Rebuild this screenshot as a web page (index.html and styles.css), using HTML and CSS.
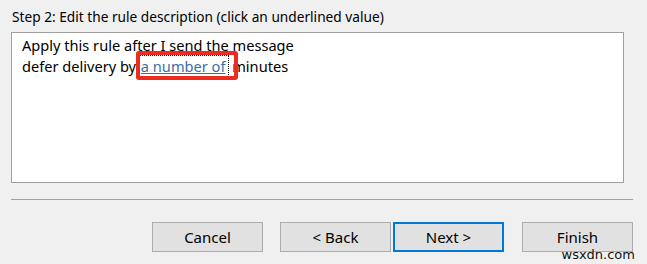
FILE: index.html
```html
<!DOCTYPE html>
<html>
<head>
<meta charset="utf-8">
<link rel="stylesheet" href="styles.css">
</head>
<body>
<div class="dialog">
  <div class="label">Step 2: Edit the rule description (click an underlined value)</div>
  <div class="desc">
    <div class="line">Apply this rule after I send the message</div>
    <div class="line">defer delivery by <span class="val"><a class="link">a number of</a></span> minutes</div>
  </div>
  <div class="sep"></div>
  <div class="buttons">
    <button class="btn">Cancel</button>
    <button class="btn back">&lt; Back</button>
    <button class="btn next">Next &gt;</button>
    <button class="btn finish">Finish</button>
  </div>
  <div class="wm">wsxdn.com</div>
</div>
</body>
</html>
```
FILE: styles.css
```css
html, body {
  margin: 0;
  padding: 0;
  background: #f0f0f0;
}
body {
  width: 647px;
  height: 264px;
  overflow: hidden;
  font-family: "Noto Sans", "Open Sans", sans-serif;
  font-size: 14px;
  color: #000;
}
.dialog {
  position: relative;
  height: 264px;
  padding: 7px 14px 0 11px;
  box-sizing: border-box;
}
.label {
  font-size: 13.7px;
  line-height: 20px;
  padding-left: 1px;
  height: 25px;
}
.desc {
  width: 613px;
  height: 151px;
  box-sizing: border-box;
  background: #fff;
  border: 1px solid #a0a0a0;
  padding: 2px 10px;
  font-size: 14.6px;
}
.line {
  line-height: 21px;
}
.val {
  position: relative;
  display: inline-block;
}
.link {
  color: #3b6ea5;
  text-decoration: underline;
  outline: 1px dotted #000;
  outline-offset: 0;
  padding: 0 3px 0 1px;
}
.val::after {
  content: "";
  position: absolute;
  left: -4px;
  right: -10px;
  top: -5px;
  bottom: -3px;
  border: 4px solid #ee2b1f;
  border-radius: 3px;
}
.sep {
  margin-top: 16px;
  width: 622px;
  height: 0;
  border-top: 1px solid #a0a0a0;
}
.buttons {
  display: flex;
  justify-content: flex-end;
  margin-top: 22px;
}
.btn {
  width: 111px;
  height: 30px;
  box-sizing: border-box;
  background: #e1e1e1;
  border: 1px solid #adadad;
  font-family: inherit;
  font-size: 15px;
  color: #000;
  padding: 0;
  margin-left: 17px;
}
.back { margin-left: 17px; }
.next {
  margin-left: 2px;
  border: 2px solid #0078d7;
}
.finish { margin-left: 18px; }
.wm {
  position: absolute;
  right: 12px;
  bottom: 2px;
  font-family: "DejaVu Sans", sans-serif;
  font-size: 13px;
  color: #111;
}
```
